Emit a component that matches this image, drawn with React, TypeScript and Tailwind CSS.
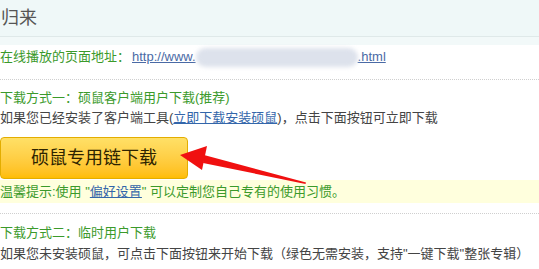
export default function App() {
  return (
    <div className="relative w-[539px] h-[269px] overflow-hidden bg-white font-['Liberation_Sans','Noto_Sans_CJK_SC',sans-serif] text-[13px] text-[#444]">
      {/* header */}
      <div className="h-[37px] bg-[#eff8f8] border-b border-[#dfe9e9] flex items-center pl-[1px]">
        <span className="text-[18px] text-[#555] leading-none">归来</span>
      </div>
      <div className="h-[8px] bg-[#f2f9f9]" />

      {/* url row */}
      <div className="h-[24px] flex items-center whitespace-nowrap">
        <span className="text-[#3b9a2b]">在线播放的页面地址：</span>
        <span className="ml-[2px] text-[#4a6aa5] underline">http://www.</span>
        <span className="inline-block w-[162px] h-[19px] rounded-full bg-[#dde2ec] blur-[2px]" />
        <span className="text-[#4a6aa5] underline">.html</span>
      </div>
      <div className="mt-[10px] border-t border-dotted border-[#cfcfcf]" />

      {/* section 1 */}
      <div className="mt-[8px] leading-[20px] whitespace-nowrap">
        <div className="text-[#3b9a2b]">下载方式一：硕鼠客户端用户下载(推荐)</div>
        <div>
          如果您已经安装了客户端工具(<span className="text-[#3366aa] underline">立即下载安装硕鼠</span>)，点击下面按钮可立即下载
        </div>
      </div>
      <button className="mt-[9px] w-[188px] h-[42px] rounded-[4px] border border-[#e3ad00] bg-gradient-to-b from-[#ffe066] to-[#ffbd00] text-[18px] text-[#2e2400] flex items-center justify-center">
        硕鼠专用链下载
      </button>
      <div className="mt-[1px] h-[23px] bg-[#ffffdd] flex items-center text-[#3b9a2b] whitespace-nowrap">
        温馨提示:使用&nbsp;"<span className="text-[#3366aa] underline">偏好设置</span>"&nbsp;可以定制您自己专有的使用习惯。
      </div>
      <div className="mt-[10px] border-t border-dotted border-[#cfcfcf]" />

      {/* section 2 */}
      <div className="mt-[8px] leading-[21px] whitespace-nowrap">
        <div className="text-[#3b9a2b]">下载方式二：临时用户下载</div>
        <div>如果您未安装硕鼠，可点击下面按钮来开始下载（绿色无需安装，支持"一键下载"整张专辑）</div>
      </div>

      {/* red arrow annotation */}
      <svg className="absolute left-0 top-0 pointer-events-none" width="539" height="269">
        <polygon points="204,155 306,182.5 305.5,184 203,163" fill="#f01010" />
        <polygon points="180,155 207,146 202,170" fill="#f01010" />
      </svg>
    </div>
  )
}
